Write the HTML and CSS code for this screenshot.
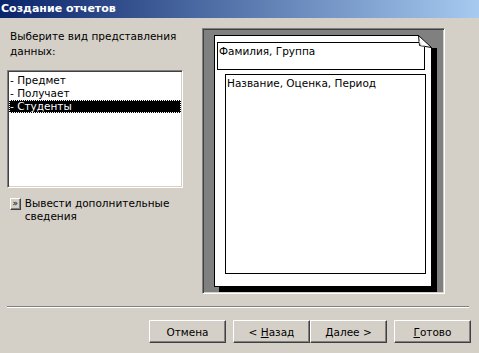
FILE: index.html
```html
<!DOCTYPE html>
<html lang="ru">
<head>
    <meta charset="UTF-8">
    <title>Создание отчетов</title>
    <link rel="stylesheet" href="styles.css">
</head>
<body>
    <div class="window">
        <div class="titlebar">Создание отчетов</div>

        <div class="main">
            <div class="left">
                <p class="prompt">Выберите вид представления данных:</p>
                <ul class="list">
                    <li>- Предмет</li>
                    <li>- Получает</li>
                    <li class="selected">- Студенты</li>
                </ul>
                <div class="more">
                    <span class="more-btn">&raquo;</span>
                    <span class="more-text">Вывести дополнительные сведения</span>
                </div>
            </div>

            <div class="preview">
                <div class="page">
                    <div class="group">Фамилия, Группа</div>
                    <div class="detail">Название, Оценка, Период</div>
                    <!-- загнутый уголок листа -->
                    <svg class="fold" width="21" height="14" viewBox="0 0 21 14">
                        <polygon points="1,0 21,0 21,13 15,13" fill="#808080"/>
                        <polygon points="1.5,0.5 2.5,10.5 14.5,12.5" fill="#fff" stroke="#000" stroke-width="1"/>
                        <path d="M2.5 6 L3.5 10 L8 11" fill="none" stroke="#c0c0c0" stroke-width="1"/>
                    </svg>
                </div>
            </div>
        </div>

        <div class="separator"></div>

        <div class="buttons">
            <button class="btn">Отмена</button>
            <button class="btn btn-back">&lt; <u>Н</u>азад</button>
            <button class="btn btn-next"><u>Д</u>алее &gt;</button>
            <button class="btn"><u>Г</u>отово</button>
        </div>
    </div>
</body>
</html>
```

FILE: styles.css
```css
body {
    margin: 0;
    padding: 0;
    background-color: #d4d0c8;
    color: #000;
    font-family: "DejaVu Sans", sans-serif;
    font-size: 10.5px;
}

.window {
    width: 479px;
    height: 353px;
    overflow: hidden;
}

.titlebar {
    height: 18px;
    line-height: 18px;
    padding-left: 1px;
    color: #fff;
    font-weight: bold;
    font-size: 11px;
    background: linear-gradient(to right, #0a246a, #a6caf0);
}

.main {
    display: flex;
    height: 278px;
    padding: 10px 0 0 7px;
}

.left {
    width: 176px;
}

.prompt {
    margin: 0;
    padding: 1px 0 0 3px;
    line-height: 15px;
}

/* утопленная рамка в стиле Windows */
.list,
.preview {
    box-sizing: border-box;
    border: 1px solid;
    border-color: #808080 #fff #fff #808080;
    box-shadow: inset 1px 1px #404040, inset -1px -1px #d4d0c8;
}

.list {
    list-style: none;
    margin: 11px 0 0;
    padding: 3px 1px 0;
    height: 118px;
    background: #fff;
}

.list li {
    height: 13px;
    line-height: 13px;
    padding-left: 1px;
}

.list .selected {
    background: #000;
    color: #fff;
    outline: 1px dotted #fff;
    outline-offset: -1px;
}

.more {
    display: flex;
    align-items: flex-start;
    margin-top: 10px;
    padding-left: 3px;
}

.more-btn {
    box-sizing: border-box;
    width: 13px;
    height: 12px;
    margin-right: 4px;
    font-size: 9px;
    line-height: 9px;
    text-align: center;
    border: 1px solid;
    border-color: #fff #404040 #404040 #fff;
    box-shadow: inset -1px -1px #808080;
}

.more-text {
    line-height: 13px;
    margin-top: -1px;
}

.preview {
    width: 243px;
    height: 266px;
    margin-left: 19px;
    padding: 6px 0 0 11px;
    background: #808080;
}

.page {
    position: relative;
    box-sizing: border-box;
    width: 218px;
    height: 252px;
    padding: 6px 0 0 2px;
    background: #fff;
    border: 1px solid #000;
    box-shadow: 5px 5px 0 #000;
}

.group {
    box-sizing: border-box;
    width: 208px;
    height: 28px;
    padding: 2px 0 0 1px;
    border: 1px solid #000;
}

.detail {
    box-sizing: border-box;
    width: 201px;
    height: 200px;
    margin: 4px 0 0 8px;
    padding: 2px 0 0 1px;
    border: 1px solid #000;
}

.fold {
    position: absolute;
    top: -1px;
    right: -7px;
    display: block;
}

.separator {
    width: 462px;
    height: 0;
    margin-left: 7px;
    border-top: 1px solid #808080;
    border-bottom: 1px solid #fff;
}

.buttons {
    display: flex;
    padding: 12px 0 0 149px;
}

.btn {
    box-sizing: border-box;
    width: 77px;
    height: 23px;
    margin: 0 0 0 7px;
    padding: 0;
    font-family: inherit;
    font-size: inherit;
    color: #000;
    background: #d4d0c8;
    border: 1px solid;
    border-color: #fff #404040 #404040 #fff;
    box-shadow: inset -1px -1px #808080;
}

.btn:first-child {
    margin-left: 0;
}

.btn-next {
    margin-left: 0;
}
```
